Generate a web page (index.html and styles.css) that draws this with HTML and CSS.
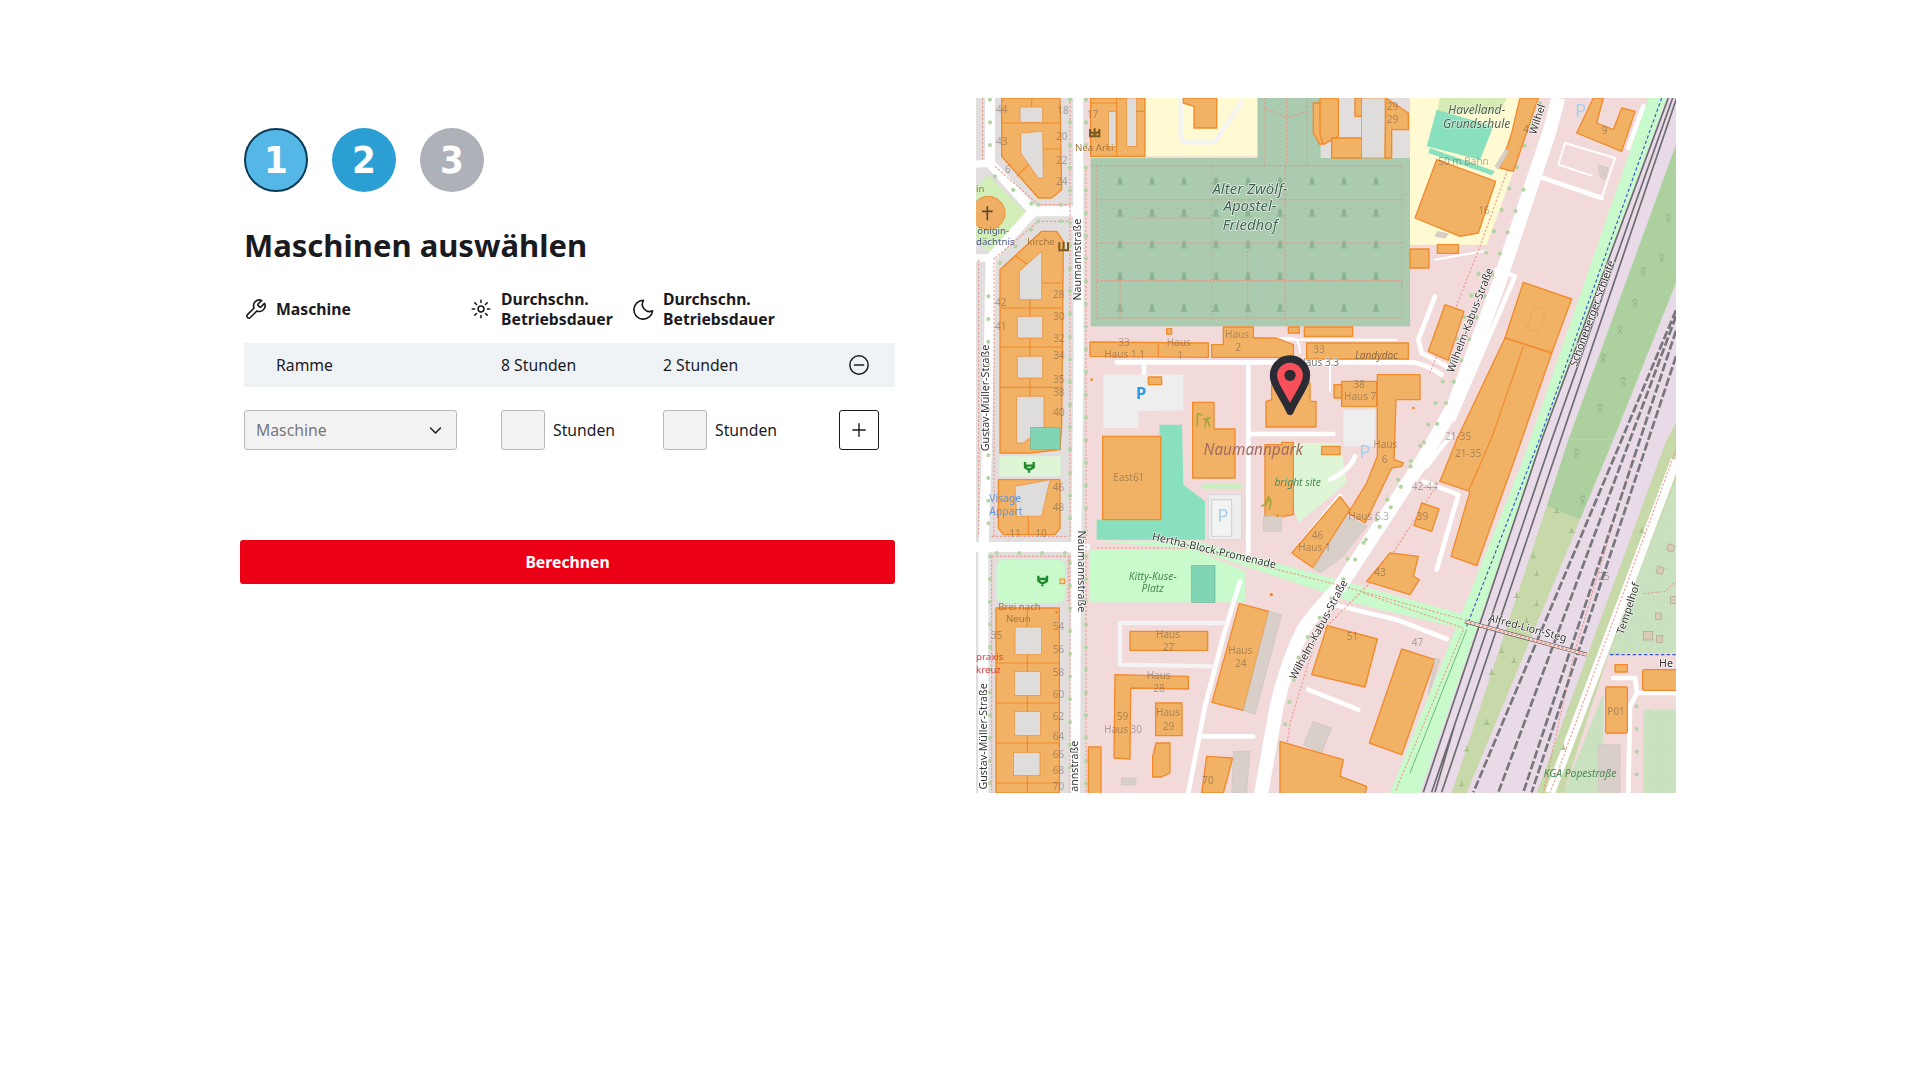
FILE: index.html
```html
<!DOCTYPE html>
<html lang="de">
<head>
<meta charset="utf-8">
<title>Maschinen auswählen</title>
<link rel="stylesheet" href="styles.css">
</head>
<body>
<main class="page">
  <section class="form">
    <div class="steps">
      <div class="step step-current">1</div>
      <div class="step step-active">2</div>
      <div class="step step-next">3</div>
    </div>
    <h1 class="title">Maschinen auswählen</h1>
    <div class="machines">
      <div class="row head">
        <div class="cell">
          <svg class="ico" viewBox="0 0 24 24"><path d="M14.7 6.3a1 1 0 0 0 0 1.4l1.6 1.6a1 1 0 0 0 1.4 0l3.77-3.77a6 6 0 0 1-7.94 7.94l-6.91 6.91a2.12 2.12 0 0 1-3-3l6.91-6.91a6 6 0 0 1 7.94-7.94l-3.76 3.76z"/></svg>
          <span>Maschine</span>
        </div>
        <div class="cell cell-sun">
          <svg class="ico ico-sun" viewBox="0 0 24 24"><circle cx="12" cy="12" r="3.2"/><path d="M12 2.5v2.5M12 19v2.5M2.5 12h2.5M19 12h2.5M5.3 5.3l1.8 1.8M16.9 16.9l1.8 1.8M5.3 18.7l1.8-1.8M16.9 7.1l1.8-1.8"/></svg>
          <span>Durchschn.<br>Betriebsdauer</span>
        </div>
        <div class="cell">
          <svg class="ico" viewBox="0 0 24 24"><path d="M12 2.5a7.5 7.5 0 0 0 9.5 10.8A9.8 9.8 0 1 1 12 2.5Z"/></svg>
          <span>Durchschn.<br>Betriebsdauer</span>
        </div>
      </div>
      <div class="row item">
        <div class="cell text">Ramme</div>
        <div class="cell text">8 Stunden</div>
        <div class="cell text">2 Stunden</div>
        <div class="cell action">
          <svg class="ico ico-minus" viewBox="0 0 24 24"><circle cx="12" cy="12" r="10"/><path d="M7 12h10"/></svg>
        </div>
      </div>
      <div class="row entry">
        <div class="cell">
          <div class="select"><span>Maschine</span>
            <svg class="ico ico-chev" viewBox="0 0 24 24"><path d="M5 8.5l7 7 7-7"/></svg>
          </div>
        </div>
        <div class="cell hours"><input class="num" type="text" aria-label="Stunden Tag"><span>Stunden</span></div>
        <div class="cell hours"><input class="num" type="text" aria-label="Stunden Nacht"><span>Stunden</span></div>
        <div class="cell action">
          <button class="add" type="button" aria-label="Hinzufügen"><svg class="ico ico-plus" viewBox="0 0 24 24"><path d="M12 4v16M4 12h16"/></svg></button>
        </div>
      </div>
    </div>
    <button class="submit" type="button">Berechnen</button>
  </section>

  <svg class="map" viewBox="18 25 2100 2085" role="img" aria-label="Karte">
    <defs>
      <pattern id="graves" patternUnits="userSpaceOnUse" x="402" y="245" width="96" height="95">
        <path d="M48 18a6 6 0 0 1 6 6l1 12 6 5h-26l6-5 1-12a6 6 0 0 1 6-6z" fill="#8bb594"/>
      </pattern>
      <pattern id="plots" patternUnits="userSpaceOnUse" width="32" height="32">
        <circle cx="8" cy="8" r="2" fill="#e6f2e0"/>
      </pattern>
      <path id="tree2" d="M-8 -12a7 7 0 1 1 6 10l-3 12M8 -12a7 7 0 1 0 -6 10l3 12" fill="none" stroke="#8fb583" stroke-width="2.5"/>
      <path id="shrub" d="M-12 10l8-4 4-16 4 16 8 4z" fill="#a7bd8a"/>
    </defs>

    <!-- ground -->
    <rect class="l-pink" x="0" y="0" width="2200" height="2200"/>
    <rect class="l-resi" x="0" y="0" width="345" height="2200"/>
    <rect class="l-resi" x="1050" y="25" width="270" height="185"/>

    <!-- rail corridor and greens -->
    <polygon class="l-rail" points="2085,0 2200,0 2200,2200 1300,2200 1690,1050"/>
    <polygon class="l-park" points="2035,25 2090,25 1715,1050 1350,2110 1260,2110 1660,1108"/>
    <polygon class="l-wood" points="2118,165 2118,580 1930,1050 1795,1050"/>
    <polygon class="l-wood" points="1795,1050 1930,1050 1830,1290 1730,1250"/>
    <polygon class="l-meadow" points="1730,1250 1830,1290 1490,2110 1445,2110"/>
    <polygon class="l-meadow" points="2118,1000 2118,1200 1810,2110 1700,2110 2090,1050"/>
    <polygon class="l-allot" points="2118,1170 2118,1690 1920,1690 1990,1490"/>
    <polygon class="l-pink" points="1915,1695 2118,1695 2118,2110 1780,2110"/>
    <polygon class="l-allot" points="1900,1810 1900,2110 1780,2110"/>
    <rect class="l-allot" x="2020" y="1860" width="98" height="250"/>
    <polygon fill="url(#plots)" points="2118,1170 2118,1690 1920,1690 1990,1490"/>
    <polygon fill="url(#plots)" points="1900,1810 1900,2110 1780,2110"/>
    <rect fill="url(#plots)" x="2020" y="1860" width="98" height="250"/>
    <g class="huts">
      <rect x="2092" y="1365" width="20" height="20" transform="rotate(18 2102 1375)"/>
      <rect x="2060" y="1432" width="20" height="20" transform="rotate(18 2070 1442)"/>
      <rect x="2102" y="1520" width="18" height="22"/>
      <rect x="2056" y="1570" width="18" height="20"/>
      <rect x="2020" y="1625" width="28" height="26"/>
      <rect x="2060" y="1638" width="18" height="20"/>
    </g>
    <path class="foot" d="M2020 1512L2085 1505L2118 1475"/>

    <!-- cemetery -->
    <rect class="l-cem" x="362" y="205" width="958" height="505"/>
    <rect class="l-cem" x="862" y="25" width="190" height="185"/>
    <rect fill="url(#graves)" x="402" y="245" width="880" height="440"/>
    <path class="foot" d="M365 228H1298M380 330H1298M380 460H1298M380 573H1298M380 685H1298M380 228V685M725 228V685M945 228V685M833 460V685M450 573V685M1295 228V685M487 385H725M885 55L950 85 1015 65M950 25V228M1012 25V228M885 25V228"/>

    <!-- school -->
    <polygon class="l-school" points="1320,25 1700,25 1625,260 1550,465 1320,465"/>
    <rect class="l-school" x="525" y="25" width="337" height="175"/>
    <path class="service-soft" d="M632 25V140Q632 158 655 158H725Q735 158 745 142L816 36"/>
    <polygon class="l-meadow-soft" points="1410,25 1610,25 1590,70 1400,70"/>
    <polygon class="l-pitch" points="1400,60 1570,110 1530,210 1370,170"/>
    <polygon class="l-pitch" points="1380,175 1575,245 1565,257 1375,190"/>

    <!-- other landuse -->
    <polygon class="l-pitch" points="568,1005 636,1005 640,1185 705,1235 705,1350 380,1350 380,1290 572,1290"/>
    <polygon class="l-soft" points="88,1100 272,1100 272,1160 88,1160"/>
    <polygon class="l-soft" points="970,1060 1110,1060 1130,1180 985,1300 970,1250"/>
    <rect class="l-park" x="80" y="1410" width="205" height="130" rx="22"/>
    <polygon class="l-park" points="370,1355 680,1355 1120,1475 1500,1580 1490,1620 1150,1540 1040,1500 665,1378"/>
    <polygon class="l-park" points="358,1380 665,1378 825,1445 825,1538 358,1538"/>
    <rect class="l-pitch-d" x="665" y="1428" width="70" height="110"/>
    <polygon class="l-green" points="18,290 55,255 170,370 55,490 18,450"/>
    <rect class="l-pitch-d" x="182" y="1013" width="88" height="67"/>

    <!-- parking -->
    <polygon class="l-park-lot" points="400,855 640,855 640,962 505,965 505,1015 400,1015"/>
    <rect class="l-park-lot" x="715" y="1215" width="100" height="135" stroke="#d8d8d8" stroke-width="3"/>
    <rect x="725" y="1230" width="60" height="110" fill="#f3f3f3" stroke="#cfcfcf" stroke-width="3"/>
    <path d="M700 1190H810" stroke="#c8eec0" stroke-width="14" stroke-linecap="round"/>
    <rect class="l-park-lot" x="1120" y="960" width="95" height="110"/>

    <!-- roads -->
    <path class="road" d="M325 25V365M325 365L326 800L318 1400L315 2110"/>
    <path class="road" d="M60 25V220L190 365H325M190 365L62 505L50 1100L40 1400V2110"/>
    <path class="road" d="M0 1372H345"/>
    <path class="road-m" d="M0 225L60 220M62 505H0"/>
    <path class="road-xl" d="M870 2130L920 1850Q950 1720 1000 1620Q1040 1560 1110 1490L1360 1108L1450 950L1580 600L1740 120L1765 25"/>
    <path class="service" d="M440 818H1330Q1370 825 1415 855"/>
    <path class="service" d="M835 825V1033M835 1033H1090M835 1033V1390M522 818V850"/>
    <path class="service-n" d="M1080 830V905M1395 510L1550 483M895 745H960Q990 745 990 790M1280 750H930"/>
    <path class="service" d="M1395 620L1345 750L1355 790L1430 830"/>
    <path class="service" d="M1580 540L1635 560L1450 990M1440 1040L1370 1130"/>
    <path class="service-n" d="M1690 255L1895 325L1935 205L1785 160L1765 225L1865 258"/>
    <path class="service" d="M2020 50L1975 175M1690 255L1895 325"/>
    <path class="service" d="M810 1475L760 1640L705 1850L655 2110M690 1940H850"/>
    <path class="service-soft" d="M765 1600H450V1725L730 1730"/>
    <path class="service" d="M1360 1175L1465 1215L1400 1440M1070 1540L1280 1590L1430 1648"/>
    <path class="service" d="M1015 1800L1165 1860M970 1390L1110 1220"/>
    <path class="service" d="M1080 1170Q1140 1140 1155 1100M1290 1200L1250 1300L1200 1350"/>
    <path class="road-t" d="M2118 1110L1740 2110"/>
    <path class="service" d="M1930 1765H1995Q2000 1800 2000 1810H2118M2000 1810L1980 1850L1975 2110"/>

    <!-- footways and street trees -->
    <path class="foot" d="M348 228V2110M300 25V1340M300 1395V2110M75 230L205 345H300M75 505L205 395H300M65 1400H295V1540M65 1400V2110M65 1340H295M72 1340V500M38 25V210M26 510V1340"/>
    <path class="foot" d="M1690 25L1530 470L1380 850M1470 1080L1230 1450L1040 1640L960 1900L930 2110"/>
    <path class="foot" d="M380 1375H670L1120 1490L1480 1590M1180 1510L1480 1615M1480 1620L1275 2108M2118 1080L1740 2110"/>
    <path class="foot" d="M1990 1100L1810 1700L1720 2110"/>
    <path class="dots" d="M348 30V1340M348 1400V2100M300 30V340M300 400V1340M75 260L195 350M90 520L205 395M55 620V1340M60 30V200M300 1420V2100M80 1390H290M60 1400V2100M205 345H290M205 395H290"/>
    <path class="dots" d="M1710 40L1530 540L1420 870L1360 1050L1240 1300L1120 1420M1660 300L1550 600L1450 880L1410 990L1290 1160L1150 1420L990 1680L930 1980M2000 1850V2100"/>
    <path class="cycle" d="M2075 25L1708 1050L1490 1610M1920 1695H2118"/>
    <path class="cycle-g" d="M1490 1620L1320 2050"/>

    <!-- rail -->
    <path class="rail-d" d="M2095 25L1715 1050L1360 2108M2108 25L1745 1050L1385 2108M2120 25L1772 1050L1415 2108M1455 1902L1395 2108"/>
    <path class="rail" d="M2118 662L1955 1050L1510 2108M2118 680L1980 1050L1585 2108M2118 723L2010 1050L1660 2108M2118 800L2035 1050L1685 2108"/>
    <use href="#tree2" x="2095" y="390"/><use href="#tree2" x="2020" y="550"/><use href="#tree2" x="1995" y="645"/><use href="#tree2" x="1950" y="725"/><use href="#tree2" x="1900" y="810"/><use href="#tree2" x="1960" y="880"/><use href="#tree2" x="1890" y="960"/><use href="#tree2" x="1820" y="1095"/><use href="#tree2" x="1838" y="1235"/><use href="#tree2" x="2075" y="510"/>
    <use href="#shrub" x="1760" y="1260"/><use href="#shrub" x="1805" y="1320"/><use href="#shrub" x="1690" y="1395"/><use href="#shrub" x="1700" y="1450"/><use href="#shrub" x="1640" y="1515"/><use href="#shrub" x="1700" y="1540"/><use href="#shrub" x="1670" y="1590"/><use href="#shrub" x="1595" y="1680"/><use href="#shrub" x="1632" y="1710"/><use href="#shrub" x="1565" y="1745"/><use href="#shrub" x="1550" y="1895"/><use href="#shrub" x="1490" y="1975"/><use href="#shrub" x="1475" y="2080"/><use href="#shrub" x="2015" y="1320"/><use href="#shrub" x="1780" y="1970"/>

    <!-- bridge -->
    <path d="M1485 1595L1850 1695" stroke="#555" stroke-width="12"/>
    <path d="M1485 1595L1850 1695" stroke="#f7ede9" stroke-width="8"/>
    <path d="M1485 1595L1850 1695" stroke="#fa8072" stroke-width="4" stroke-dasharray="8 5"/>

    <!-- courtyard buildings -->
    <polygon class="b" points="95,25 270,25 275,300 245,325 205,325 95,200"/>
    <path class="b-line" d="M95 100H272M218 178H275M140 260L175 225M185 25V100"/>
    <polygon class="c" points="150,52 218,52 218,98 150,98"/>
    <polygon class="c" points="152,130 218,125 220,265 205,265 152,190"/>
    <polygon class="b" points="90,540 215,425 260,425 280,455 275,1010 270,1080 180,1090 90,1090"/>
    <path class="b-line" d="M90 655H275M90 772H275M90 893H272M180 630V1010M138 500L175 525M210 580H275"/>
    <polygon class="c" points="148,545 215,485 215,630 148,630"/>
    <polygon class="c" points="142,680 218,680 218,745 142,745"/>
    <polygon class="c" points="142,800 218,800 218,865 142,865"/>
    <polygon class="c" points="140,920 222,920 222,1010 160,1060 140,1060"/>
    <rect class="l-pitch-d" x="182" y="1013" width="88" height="67"/>
    <polygon class="b" points="85,1170 270,1170 270,1315 255,1335 100,1335 85,1315"/>
    <polygon class="c" points="135,1190 240,1170 215,1280 140,1280"/>
    <path class="b-line" d="M175 1280V1335"/>
    <polygon class="b" points="78,1555 268,1555 268,2110 78,2110"/>
    <path class="b-line" d="M78 1720H268M78 1840H268M78 1960H268M78 2080H268M172 1555V2110"/>
    <rect class="c" x="135" y="1612" width="80" height="83"/>
    <rect class="c" x="133" y="1745" width="79" height="72"/>
    <rect class="c" x="133" y="1865" width="79" height="73"/>
    <rect class="c" x="130" y="1988" width="80" height="70"/>
    <circle cx="55" cy="370" r="50" fill="#f0ad64" stroke="#ec8f35" stroke-width="3"/>
    <path d="M52 350V392M36 365H68" stroke="#5f4a2a" stroke-width="5"/>

    <!-- buildings north -->
    <rect class="b" x="362" y="25" width="163" height="175"/>
    <rect class="c" x="470" y="25" width="30" height="145"/>
    <rect class="c" x="415" y="65" width="23" height="105"/>
    <path class="b-line" d="M362 40H440M440 25V200M500 65H525"/>
    <polygon class="b" points="640,25 740,25 740,115 672,115 672,50 640,40"/>
    <polygon class="b" points="1030,40 1080,40 1080,150 1050,165 1030,130"/>
    <rect class="c" x="1050" y="40" width="30" height="50"/>
    <polygon class="b" points="1050,25 1105,25 1105,140 1060,165 1050,135"/>
    <rect class="b" x="1085" y="145" width="90" height="60"/>
    <rect class="b" x="1155" y="25" width="20" height="55"/>
    <rect class="c" x="1175" y="25" width="70" height="180"/>
    <polygon class="b" points="1248,25 1315,70 1315,120 1265,120 1265,205 1245,205"/>

    <polygon class="b" points="1400,210 1577,275 1525,430 1470,440 1335,385"/>
    <polygon class="b" points="1650,25 1705,25 1630,245 1590,235 1625,130"/>
    <polygon class="g" points="1605,180 1617,182 1585,240 1575,230"/>
    <polygon class="g" points="1403,425 1435,432 1425,445 1395,440"/>
    <polygon class="g" points="1885,225 1915,235 1905,270 1890,262"/>
    <polygon class="b" points="1820,130 1870,25 1900,25 1880,100 1930,120 1955,55 1995,65 1955,185"/>
    <rect class="b" x="1320" y="478" width="57" height="57"/>
    <rect class="b" x="1402" y="465" width="63" height="26"/>
    <polygon class="b" points="1425,645 1482,665 1435,812 1375,785"/>

    <polygon class="b" points="360,757 715,760 715,803 360,800"/>
    <path class="b-line" d="M565 760V800"/>
    <polygon class="b" points="725,765 760,765 760,712 850,712 850,745 920,745 970,765 970,803 725,803"/>
    <rect class="b" x="1010" y="760" width="305" height="48"/>
    <rect class="b" x="1003" y="712" width="145" height="28"/>
    <rect class="b" x="955" y="712" width="33" height="18"/>
    <rect class="b" x="590" y="717" width="15" height="16"/>
    <rect class="b" x="535" y="862" width="40" height="23" rx="2"/>
    <polygon class="b" points="668,938 732,938 732,1018 795,1018 795,1165 668,1165"/>
    <rect class="b" x="398" y="1040" width="174" height="250"/>
    <polygon class="b" points="888,935 905,930 905,880 1020,880 1020,935 1038,935 1038,1012 888,1012"/>
    <polygon class="b" points="885,1065 935,1065 935,1058 970,1058 970,1275 885,1290"/>
    <rect class="b" x="1055" y="1070" width="55" height="25"/>
    <rect class="g" x="880" y="1280" width="55" height="45"/>
    <rect class="b" x="1115" y="875" width="105" height="75"/>
    <rect class="b" x="1092" y="885" width="23" height="40"/>
    <polygon class="b" points="1222,855 1350,855 1350,930 1278,930 1272,1110 1300,1120 1295,1130 1265,1135 1185,1300 1135,1270 1190,1180 1222,1100"/>
    <polygon class="b" points="1110,1220 1140,1260 1050,1400 1030,1435 965,1390"/>
    <polygon class="g" points="1190,1310 1120,1400 1050,1450 1030,1435 1130,1280"/>

    <polygon class="b" points="1660,578 1805,628 1745,790 1605,745"/>
    <rect x="1680" y="655" width="38" height="70" transform="rotate(18 1700 690)" fill="none" stroke="#e6a45a" stroke-width="2"/>
    <polygon class="b" points="1605,745 1745,790 1655,1050 1520,1428 1443,1400 1500,1205 1410,1175 1460,1050"/>
    <path class="b-line" d="M1660 770L1565 1045L1495 1205"/>

    <!-- buildings south -->
    <polygon class="b" points="808,1542 897,1565 820,1862 726,1838"/>
    <polygon class="g" points="897,1565 935,1575 855,1875 820,1862"/>
    <rect class="b" x="480" y="1625" width="233" height="57"/>
    <polygon class="b" points="435,1755 655,1760 655,1798 482,1795 480,2008 432,2005"/>
    <rect class="b" x="557" y="1840" width="79" height="98"/>
    <polygon class="b" points="558,1960 600,1960 600,2050 575,2062 548,2062 548,2000"/>
    <rect class="b" x="355" y="1972" width="38" height="140"/>
    <rect class="g" x="455" y="2065" width="43" height="21"/>
    <polygon class="b" points="710,2000 788,2005 760,2110 695,2110"/>
    <polygon class="g" points="790,1985 840,1985 830,2110 785,2110"/>
    <polygon class="b" points="1355,1240 1407,1258 1385,1325 1332,1308"/>
    <polygon class="b" points="1260,1390 1345,1400 1330,1460 1348,1470 1320,1515 1190,1475"/>
    <polygon class="b" points="1072,1608 1222,1648 1185,1792 1025,1755"/>
    <polygon class="b" points="1295,1678 1395,1710 1295,1995 1198,1960"/>
    <polygon class="g" points="1395,1705 1410,1710 1375,1815"/>
    <polygon class="g" points="1030,1895 1085,1915 1055,1990 1000,1965"/>
    <polygon class="b" points="930,1955 1120,2010 1110,2060 1190,2090 1185,2115 930,2115"/>
    <rect class="b" x="1935" y="1725" width="37" height="22"/>
    <rect class="b" x="2018" y="1740" width="110" height="62" rx="6"/>
    <rect class="b" x="1907" y="1792" width="65" height="138" rx="4"/>
    <rect class="g" x="1885" y="1965" width="65" height="150"/>

    <!-- labels -->
    <g class="hn">
      <text x="78" y="70">44</text><text x="262" y="74">18</text><text x="258" y="150">20</text><text x="258" y="222">22</text><text x="258" y="285">24</text><text x="78" y="166">43</text><text x="105" y="250">6</text><text x="350" y="85">17</text>
      <text x="248" y="625">28</text><text x="250" y="690">30</text><text x="250" y="757">32</text><text x="250" y="807">34</text><text x="250" y="880">35</text><text x="250" y="920">38</text><text x="250" y="980">40</text><text x="75" y="648">42</text><text x="75" y="722">41</text>
      <text x="248" y="1204">46</text><text x="248" y="1265">48</text><text x="118" y="1343">11</text><text x="196" y="1343">10</text><text x="62" y="1648">35</text><text x="248" y="1620">54</text><text x="248" y="1690">56</text><text x="248" y="1758">58</text><text x="248" y="1826">60</text><text x="248" y="1890">62</text><text x="248" y="1950">64</text><text x="248" y="2006">66</text><text x="248" y="2054">68</text><text x="248" y="2100">70</text>
      <text x="445" y="770">33</text><text x="590" y="768">Haus</text><text x="622" y="808">1</text><text x="765" y="745">Haus</text><text x="796" y="785">2</text><text x="1030" y="790">33</text><text x="403" y="805">Haus 1.1</text>
      <text x="1150" y="895">38</text><text x="1122" y="932">Haus 7</text><text x="1525" y="372">16</text><text x="1250" y="60">29</text><text x="1250" y="100">29</text><text x="1405" y="226">50 m Bahn</text><text x="1660" y="130">4</text><text x="1895" y="132">9</text>
      <text x="430" y="1175">East61</text><text x="1025" y="1347">46</text><text x="985" y="1385">Haus 1</text><text x="558" y="1645">Haus</text><text x="578" y="1683">27</text><text x="530" y="1768">Haus</text><text x="550" y="1806">28</text><text x="558" y="1880">Haus</text><text x="578" y="1920">29</text><text x="440" y="1892">59</text><text x="402" y="1930">Haus 30</text><text x="775" y="1693">Haus</text><text x="795" y="1733">24</text><text x="697" y="2083">70</text>
      <text x="1455" y="1102">21-35</text>
      <text x="1325" y="1200">42-44</text><text x="1135" y="1290">Haus 6.3</text><text x="1210" y="1075">Haus</text><text x="1235" y="1120">6</text><text x="1340" y="1290">39</text><text x="1213" y="1460">43</text><text x="1130" y="1650">51</text><text x="1325" y="1670">47</text><text x="1885" y="1472">25</text><text x="1912" y="1875">P01</text><text x="1425" y="1050">21-35</text>
    </g>
    <text class="label-poi" x="315" y="185">Nea Arki</text>
    <text class="label-poi" x="172" y="467">kirche</text>
    <text class="label-poi" x="18" y="308">in</text>
    <text class="label-navy" x="22" y="432">önigin-</text>
    <text class="label-navy" x="18" y="466">dächtnis</text>
    <text class="label-poi" x="85" y="1560">Brei nach</text>
    <text class="label-poi" x="108" y="1598">Neun</text>
    <text class="label-blue" x="58" y="1237">Visage</text>
    <text class="label-blue" x="58" y="1275">Appart</text>
    <text class="label-red" x="18" y="1710">praxis</text>
    <text class="label-red" x="18" y="1750">kreuz</text>

    <g class="label-cem">
      <text x="840" y="312">Alter Zwölf-</text>
      <text x="840" y="365">Apostel-</text>
      <text x="840" y="420">Friedhof</text>
    </g>
    <g class="label-school">
      <text x="1520" y="72">Havelland-</text>
      <text x="1520" y="115">Grundschule</text>
    </g>
    <g class="label-park">
      <text x="548" y="1472">Kitty-Kuse-</text>
      <text x="548" y="1508">Platz</text>
      <text x="983" y="1190">bright site</text>
      <text x="1830" y="2062">KGA Popestraße</text>
    </g>
    <text class="label-area" x="850" y="1097">Naumannpark</text>
    <text class="label-dim" x="1155" y="807">Landydoc</text>
    <text class="label-grey" x="985" y="828">Haus 3.3</text>
    <text class="label-street" x="2088" y="1732">He</text>

    <g class="label-street">
      <text transform="translate(333 510) rotate(-90)">Naumannstraße</text>
      <text transform="translate(58 925) rotate(-90)">Gustav-Müller-Straße</text>
      <text transform="translate(50 1940) rotate(-90)">Gustav-Müller-Straße</text>
      <text transform="translate(323 1445) rotate(90)">Naumannstraße</text>
      <text transform="translate(325 2030) rotate(-90)">annstraße</text>
      <text transform="translate(730 1393) rotate(13)">Hertha-Block-Promenade</text>
      <text transform="translate(1510 695) rotate(-69)">Wilhelm-Kabus-Straße</text>
      <text transform="translate(1055 1625) rotate(-62)">Wilhelm-Kabus-Straße</text>
      <text transform="translate(1712 92) rotate(-72)">Wilhel</text>
      <text transform="translate(1877 675) rotate(-70)">Schöneberger Schleife</text>
      <text transform="translate(1670 1625) rotate(15)">Alfred-Lion-Steg</text>
      <text transform="translate(1985 1560) rotate(-72)">Tempelhof</text>
    </g>

    <text class="parking" x="498" y="928">P</text>
    <text class="parking parking-l" x="742" y="1298">P</text>
    <text class="parking parking-l" x="1815" y="82">P</text>
    <text class="parking parking-l" x="1168" y="1105">P</text>

    <!-- symbols -->
    <path class="sym-brown" d="M360 118v22h28v-22M374 116v24M360 125l14 8 14-8"/>
    <path class="sym-brown" d="M268 458v24h26v-24M281 456v24"/>
    <path class="sym-olive" d="M682 972v40M682 972l15 4M710 985l-6 28M710 985l10 28M700 990l22-6"/>
    <path class="sym-olive" d="M895 1220l-6 22-15 8M895 1220l8 20 -6 20M885 1235l20-5"/>
    <path class="sym-green" d="M165 1117v16l12 8 14-8v-16M177 1141v8M168 1128h24"/>
    <path class="sym-green" d="M205 1458v16l12 8 14-8v-16M217 1482v8M208 1468h24"/>
    <circle class="dot-o" cx="1330" cy="955" r="4"/><circle class="dot-o" cx="923" cy="1278" r="4"/><circle class="dot-o" cx="904" cy="1515" r="5"/><circle class="dot-o" cx="260" cy="1568" r="4"/><circle class="dot-o" cx="365" cy="870" r="4"/>
    <rect class="poi-box" x="270" y="1468" width="14" height="14"/>

    <!-- marker -->
    <path class="pin" d="M960 965C945 930 918 895 912 870C904 835 930 808 960 808C990 808 1016 835 1008 870C1002 895 975 930 960 965Z"/>
    <circle class="pin-dot" cx="960" cy="857" r="17"/>
  </svg>
</main>
</body>
</html>
```
FILE: styles.css
```css
* { box-sizing: border-box; }
html, body { margin: 0; background: #fff; }
body { font-family: "Noto Sans", "Liberation Sans", sans-serif; color: #1b1b1f; font-size: 15.75px; }

.page {
  display: grid;
  grid-template-columns: 655px 700px;
  column-gap: 81px;
  padding: 98px 0 0 240px;
  min-height: 1070px;
  align-items: start;
}

.form { padding-top: 30px; }

.steps { display: flex; gap: 24px; padding-left: 4px; }
.step {
  width: 64px; height: 64px; border-radius: 50%;
  display: flex; align-items: center; justify-content: center;
  color: #fff; font-family: "DejaVu Sans Condensed", "DejaVu Sans", sans-serif; font-stretch: condensed;
  font-weight: 700; font-size: 38px; line-height: 1;
}
.step-current { background: #55b7e6; border: 2px solid #0b3b57; }
.step-active { background: #2b9fd4; }
.step-next { background: #aeb2b8; }

.title {
  margin: 31px 0 0 4px;
  font-size: 31px; line-height: 44px; font-weight: 700; color: #1b1b1f;
}

.machines { margin: 20px 0 0 4px; }
.row { display: grid; grid-template-columns: 227px 161px 207px 56px; align-items: center; }
.cell { display: flex; align-items: center; min-width: 0; }

.head { height: 44px; font-weight: 700; line-height: 20px; }
.head .cell { gap: 8px; }
.head .cell:first-child { gap: 9px; }
.head .cell-sun { gap: 9px; margin-left: -1px; }
.ico { fill: none; stroke: currentColor; stroke-width: 1.7; stroke-linecap: round; stroke-linejoin: round; width: 23px; height: 23px; flex: none; }
.ico-sun { width: 22px; height: 22px; }

.item { height: 44px; margin-top: 12px; background: #eff3f6; }
.text { padding-left: 32px; }
.item .text:nth-child(2) { padding-left: 30px; }
.item .text:nth-child(3) { padding-left: 31px; }
.action { justify-content: center; width: 40px; }
.ico-minus { width: 22px; height: 22px; stroke-width: 1.6; }

.entry { margin-top: 23px; height: 40px; }
.select {
  width: 213px; height: 40px;
  display: flex; align-items: center; justify-content: space-between;
  padding: 0 12px 0 11px;
  background: #f2f2f2; border: 1px solid #b9b9bd; border-radius: 3px;
  color: #77777b;
}
.ico-chev { width: 17px; height: 17px; color: #1b1b1f; stroke-width: 2.1; }
.hours { gap: 8px; padding-left: 30px; }
.hours + .hours { padding-left: 31px; }
.num {
  width: 44px; height: 40px; padding: 0;
  background: #f2f2f2; border: 1px solid #b9b9bd; border-radius: 3px;
}
.add {
  width: 40px; height: 40px; padding: 0; display: flex; align-items: center; justify-content: center;
  background: #fff; border: 1px solid #1b1b1f; border-radius: 3px; color: #1b1b1f;
}
.ico-plus { width: 20px; height: 20px; stroke-width: 1.7; stroke-linecap: butt; }

.submit {
  display: block; width: 655px; height: 44px; margin-top: 90px;
  background: #ec0016; color: #fff; border: 0; border-radius: 3px;
  font: 700 15.75px "Noto Sans", sans-serif;
}

/* map */
.map { width: 700px; height: 695px; display: block; filter: blur(.45px); }
.l-pink { fill: #f2dadb; }
.l-resi { fill: #e2dede; }
.l-rail { fill: #e9dae7; }
.l-park { fill: #c8facc; }
.l-wood { fill: #add19e; }
.l-meadow { fill: #c7d8a9; }
.l-meadow-soft { fill: #d6ecb4; }
.l-allot { fill: #c9e1bf; }
.l-cem { fill: #aacbaf; }
.l-school { fill: #fffad2; }
.l-pitch { fill: #88e0be; }
.l-pitch-d { fill: #7fd5b4; stroke: #6fb49b; stroke-width: 2; }
.l-soft { fill: #def6d6; }
.l-green { fill: #d3eeb8; stroke: #d8d8d8; stroke-width: 2; }
.l-park-lot { fill: #eeeeee; }
.huts rect { fill: #d8cbb8; stroke: #b3a48f; stroke-width: 2; }

.road, .road-m, .road-xl, .road-t, .service, .service-n, .service-soft { fill: none; stroke: #fff; stroke-linecap: round; stroke-linejoin: round; }
.road { stroke-width: 30; }
.road-m { stroke-width: 22; }
.road-xl { stroke-width: 42; stroke-linecap: butt; }
.road-t { stroke-width: 30; stroke-linecap: butt; }
.service { stroke-width: 14; }
.service-n { stroke-width: 6; }
.service-soft { stroke-width: 13; stroke: #f4f4f4; }

.foot { fill: none; stroke: #f08f80; stroke-width: 3.4; stroke-dasharray: 7 5; opacity: .85; }
.dots { fill: none; stroke: #b4d3a2; stroke-width: 12; stroke-linecap: round; stroke-dasharray: .1 68; }
.cycle { fill: none; stroke: #3c55d0; stroke-width: 3.5; stroke-dasharray: 10 7; }
.cycle-g { fill: none; stroke: #62a86e; stroke-width: 2.5; }
.rail-d { fill: none; stroke: #6b6b70; stroke-width: 5; }
.rail { fill: none; stroke: #77777b; stroke-width: 8; stroke-dasharray: 26 8; }

.b { fill: #f1b266; stroke: #f08a2b; stroke-width: 4; stroke-linejoin: round; }
.b-line { fill: none; stroke: #f08a2b; stroke-width: 3.5; }
.c { fill: #dfdcdc; stroke: #f08a2b; stroke-width: 2; }
.g { fill: #d8cfc8; stroke: #c9bfb6; stroke-width: 1.5; }

.map text { font-family: "Noto Sans", "Liberation Sans", sans-serif; }
.hn text { font-size: 30px; fill: rgba(80, 70, 60, .42); }
.label-poi { font-size: 29px; fill: #a8773a; }
.label-navy { font-size: 29px; fill: #4c5a8a; }
.label-blue { font-size: 31px; fill: #5f97e0; }
.label-red { font-size: 29px; fill: #d8404a; }
.label-cem text { font-size: 45px; font-style: italic; text-anchor: middle; fill: #3f6350; paint-order: stroke; stroke: rgba(255,255,255,.75); stroke-width: 4px; }
.label-school text { font-size: 36px; font-style: italic; text-anchor: middle; fill: #56604a; paint-order: stroke; stroke: rgba(255,255,255,.7); stroke-width: 3px; }
.label-park text { font-size: 31px; font-style: italic; text-anchor: middle; fill: #4c8a58; }
.label-area { font-size: 46px; font-style: italic; text-anchor: middle; fill: #a36c60; }
.label-dim { font-size: 30px; font-style: italic; fill: #8a6a48; }
.label-grey { font-size: 30px; fill: #777; paint-order: stroke; stroke: #fff; stroke-width: 3px; }
.label-street, .label-street text { font-size: 32px; fill: #333; text-anchor: middle; paint-order: stroke; stroke: rgba(255,255,255,.85); stroke-width: 4px; }
.parking { font-size: 50px; font-weight: 700; fill: #2f9ae0; }
.parking-l { fill: #a9d1ef; font-weight: 400; font-size: 56px; }

.sym-brown { fill: none; stroke: #7a5a1e; stroke-width: 6; }
.sym-olive { fill: none; stroke: #a5a53a; stroke-width: 5; }
.sym-green { fill: none; stroke: #1f8a2c; stroke-width: 7; }
.dot-o { fill: #ef8a1e; }
.poi-box { fill: #f5d49b; stroke: #f08a2b; stroke-width: 3; }
.pin { fill: #f8505a; stroke: #2b2b33; stroke-width: 22; stroke-linejoin: round; }
.pin-dot { fill: #2b2b33; }
```
